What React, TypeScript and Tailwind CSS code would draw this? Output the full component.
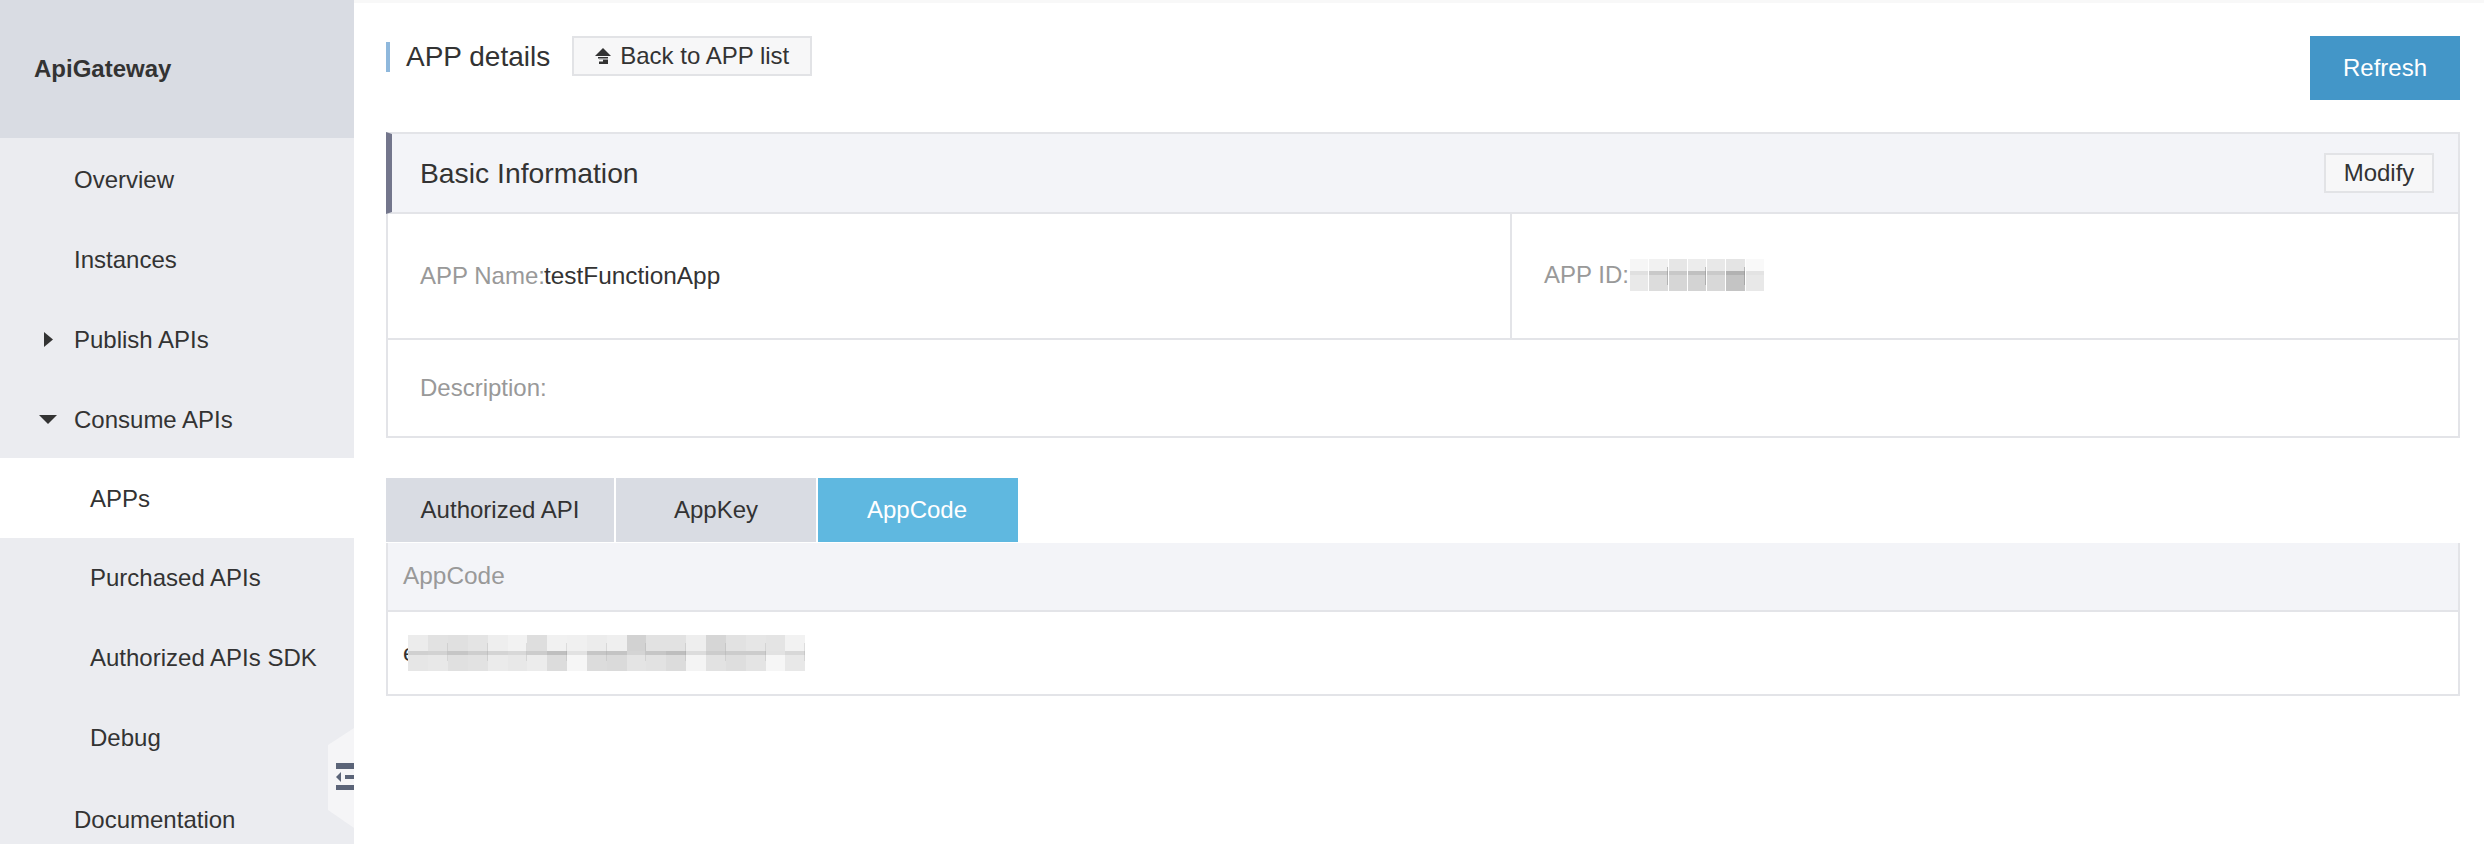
const navItems = [
  { label: 'Overview', indent: 'pl-[74px] pt-[3px]' },
  { label: 'Instances', indent: 'pl-[74px] pt-[3px]' },
  { label: 'Publish APIs', indent: 'pl-[74px] pt-[3px]', arrow: 'right' },
  { label: 'Consume APIs', indent: 'pl-[74px] pt-[3px]', arrow: 'down' },
  { label: 'APPs', indent: 'pl-[90px] pt-[1px]', active: true },
  { label: 'Purchased APIs', indent: 'pl-[90px]' },
  { label: 'Authorized APIs SDK', indent: 'pl-[90px] pb-[1px]' },
  { label: 'Debug', indent: 'pl-[90px]' },
  { label: 'Documentation', indent: 'pl-[74px] pt-[3px]' },
];

// blurred-out values: [top, band, bottom] greys per block
const appIdBlocks = [
  ['#f6f6f6', '#e0e0e0', '#e9e9e9'],
  ['#f1f1f1', '#c9c9c9', '#dcdcdc'],
  ['#e6e6e6', '#c8c8c8', '#d6d6d6'],
  ['#ececec', '#c0c0c0', '#d3d3d3'],
  ['#e8e8e8', '#cacaca', '#d8d8d8'],
  ['#e4e4e4', '#b2b2b2', '#c4c4c4'],
  ['#f9f9f9', '#e3e3e3', '#e8e8e8'],
];

const appCodeBlocks = [
  ['#ececec', '#d0d0d0', '#e6e6e6'],
  ['#e2e2e2', '#d2d2d2', '#e8e8e8'],
  ['#e0e0e0', '#c6c6c6', '#e0e0e0'],
  ['#e4e4e4', '#cecece', '#e2e2e2'],
  ['#eeeeee', '#d4d4d4', '#ebebeb'],
  ['#f2f2f2', '#d8d8d8', '#e8e8e8'],
  ['#dedede', '#cccccc', '#ececec'],
  ['#f1f1f1', '#bfbfbf', '#dcdcdc'],
  ['#f0f0f0', '#e2e2e2', '#f6f6f6'],
  ['#ececec', '#c6c6c6', '#dcdcdc'],
  ['#efefef', '#c4c4c4', '#dadada'],
  ['#d2d2d2', '#d4d4d4', '#e4e4e4'],
  ['#e2e2e2', '#c6c6c6', '#e2e2e2'],
  ['#e2e2e2', '#bebebe', '#dcdcdc'],
  ['#eeeeee', '#dcdcdc', '#f4f4f4'],
  ['#d6d6d6', '#cccccc', '#e2e2e2'],
  ['#e2e2e2', '#cccccc', '#dedede'],
  ['#e6e6e6', '#cccccc', '#e4e4e4'],
  ['#e4e4e4', '#e2e2e2', '#f6f6f6'],
  ['#f2f2f2', '#d8d8d8', '#e8e8e8'],
];

function Mosaic({ blocks, cellClass, topClass, bottomClass, tickClass }: { blocks: string[][]; cellClass: string; topClass: string; bottomClass: string; tickClass: string }) {
  return (
    <div className="flex">
      {blocks.map((b, i) => (
        <div key={i} className={`relative flex flex-col ${cellClass}`}>
          <div className={topClass} style={{ backgroundColor: b[0] }} />
          <div className="h-[4px]" style={{ backgroundColor: b[1] }} />
          <div className={bottomClass} style={{ backgroundColor: b[2] }} />
          {i % 2 === 1 && <div className={`absolute right-0 top-[8px] h-[18px] w-px ${tickClass}`} />}
        </div>
      ))}
    </div>
  );
}

function Sidebar() {
  return (
    <aside className="relative flex h-[844px] w-[354px] shrink-0 flex-col bg-[#ebecf0] text-[24px] text-[#333]">
      <div className="flex h-[138px] shrink-0 items-center bg-[#d9dce3] pl-[34px] text-[24px] font-bold">
        ApiGateway
      </div>
      {navItems.map((item) => (
        <div
          key={item.label}
          className={`relative flex h-[80px] shrink-0 items-center ${item.indent} ${item.active ? 'bg-white' : ''}`}
        >
          {item.arrow === 'right' && (
            <svg className="absolute left-[44px] top-[34px]" width="9" height="15" viewBox="0 0 9 15">
              <path d="M0 0 L9 7.5 L0 15 Z" fill="#333" />
            </svg>
          )}
          {item.arrow === 'down' && (
            <svg className="absolute left-[39px] top-[37px]" width="18" height="9" viewBox="0 0 18 9">
              <path d="M0 0 L18 0 L9 9 Z" fill="#333" />
            </svg>
          )}
          {item.label}
        </div>
      ))}
      <svg className="absolute left-[328px] top-[728px]" width="26" height="100" viewBox="0 0 26 100">
        <path d="M26 0 L0 17 L0 82 L26 100 Z" fill="#f5f5f7" />
        <rect x="8" y="35" width="18" height="6" fill="#5b6478" />
        <rect x="8" y="57" width="18" height="5" fill="#5b6478" />
        <rect x="17" y="47" width="9" height="4" fill="#5b6478" />
        <path d="M13 44 L8 49 L13 54 Z" fill="#5b6478" />
      </svg>
    </aside>
  );
}

export default function App() {
  return (
    <div className="flex h-[844px] w-[2484px] overflow-hidden bg-white font-['Liberation_Sans',Arial,sans-serif] text-[#333]">
      <Sidebar />
      <main className="flex min-w-0 flex-1 flex-col border-t-[3px] border-[#f8f8f8] pl-[32px] pr-[24px] pt-[33px]">
        <div className="flex h-[64px] shrink-0 items-start justify-between">
          <div className="flex items-start">
            <div className="mt-[6px] flex h-[30px] items-center border-l-[4px] border-[#8fb8dc] pl-[16px] text-[28px]">
              APP details
            </div>
            <button className="ml-[22px] flex h-[40px] w-[240px] items-center justify-center gap-[9px] border-2 border-[#e2e3e6] bg-[#f7f7f8] text-[24px] text-[#333]">
              <svg width="16" height="16" viewBox="0 0 16 16">
                <path d="M8 0 L16 8 L0 8 Z M3 9 H13 V10.5 H3 Z M4 11.5 H13 V16 H4 Z" fill="#333" />
                <rect x="4" y="11.5" width="4" height="2" fill="#f7f7f8" />
              </svg>
              Back to APP list
            </button>
          </div>
          <button className="h-[64px] w-[150px] bg-[#4396c8] text-[24px] text-white">Refresh</button>
        </div>

        <section className="mt-[32px] shrink-0 border-x-2 border-b-2 border-[#e3e4e8]">
          <div className="relative -ml-[2px] flex h-[82px] items-center justify-between border-y-2 border-[#e3e4e8] border-l-[6px] border-l-[#73768c] bg-[#f3f4f8] pl-[28px] pr-[24px]">
            <span className="text-[28.3px]">Basic Information</span>
            <button className="flex h-[40px] w-[110px] items-center justify-center border-2 border-[#e2e3e6] bg-[#f7f7f8] text-[24px]">
              Modify
            </button>
          </div>
          <div className="flex h-[126px] border-b-2 border-[#e3e4e8] text-[24px]">
            <div className="flex w-[1124px] items-center border-r-2 border-[#e3e4e8] pl-[32px]">
              <span className="text-[#999]">APP Name:</span>
              <span className="-ml-[1px] text-[24.4px] text-[#333]">testFunctionApp</span>
            </div>
            <div className="flex flex-1 items-center pb-[3px] pl-[32px]">
              <span className="text-[#999]">APP ID:</span>
              <div className="ml-[1px]">
                <Mosaic blocks={appIdBlocks} cellClass="w-[19.3px] border-r border-white" topClass="h-[12px]" bottomClass="h-[16px]" tickClass="bg-[#8a8a8a]/50" />
              </div>
            </div>
          </div>
          <div className="flex h-[96px] items-center pl-[32px] text-[24px] text-[#999]">Description:</div>
        </section>

        <div className="mt-[40px] flex h-[64px] shrink-0 gap-[2px] text-[24px]">
          <div className="flex w-[228px] items-center justify-center bg-[#d9dce3]">Authorized API</div>
          <div className="flex w-[200px] items-center justify-center bg-[#d9dce3]">AppKey</div>
          <div className="flex w-[200px] items-center justify-center bg-[#5fb8e0] pr-[2px] text-white">AppCode</div>
        </div>

        <section className="mt-[1px] shrink-0 border-x-2 border-b-2 border-[#e3e4e8] text-[24px]">
          <div className="flex h-[69px] items-center border-b-2 border-[#e3e4e8] bg-[#f3f4f8] pl-[15px] text-[24.4px] text-[#999]">
            AppCode
          </div>
          <div className="flex h-[82px] items-center pl-[15px]">
            <span>e</span>
            <div className="relative -ml-[8px]">
              <Mosaic blocks={appCodeBlocks} cellClass="w-[19.85px]" topClass="h-[16px]" bottomClass="h-[16px]" tickClass="bg-[#8a8a8a]/20" />
            </div>
          </div>
        </section>
      </main>
    </div>
  );
}
